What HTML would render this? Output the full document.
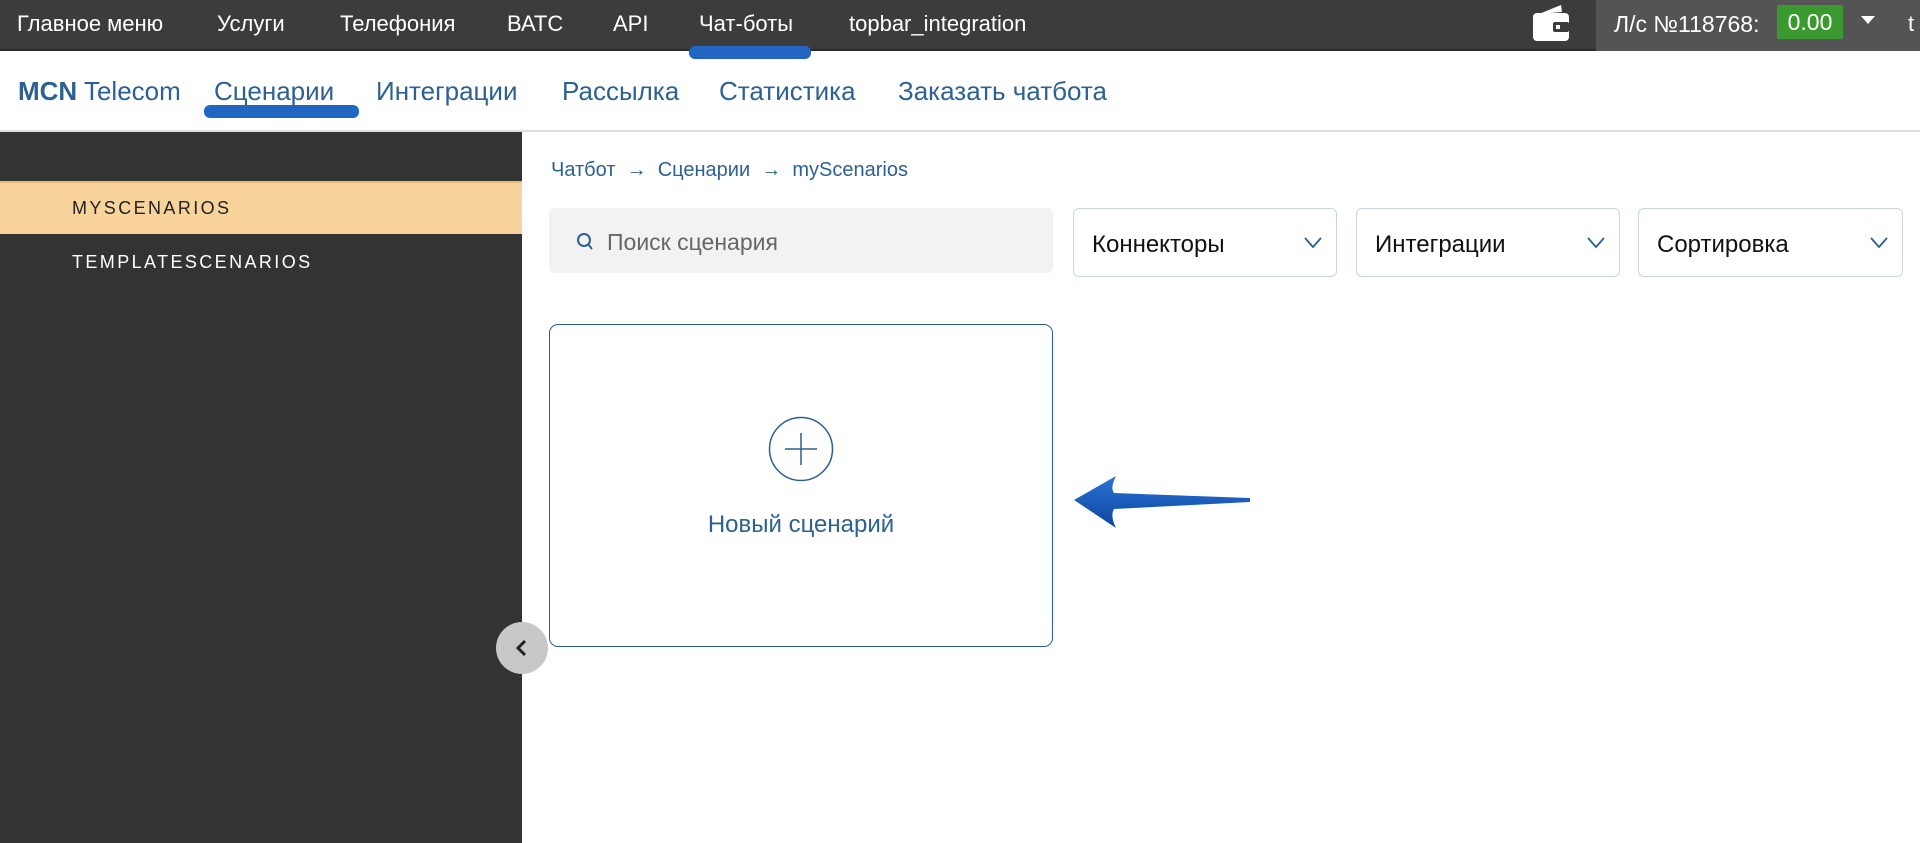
<!DOCTYPE html>
<html><head><meta charset="utf-8"><style>
*{margin:0;padding:0;box-sizing:border-box}
body{width:1920px;height:843px;overflow:hidden;background:#fff;font-family:"Liberation Sans","DejaVu Sans",sans-serif;position:relative}
.a{position:absolute;white-space:nowrap}
.top{left:0;top:0;width:1920px;height:51px;background:#3c3c3c;border-bottom:2px solid #2a2a2a}
.tm{top:11px;font-size:22px;color:#fff}
.nav{top:76px;font-size:26px;color:#2c6192}
.dd{top:208px;height:69px;border:1.5px solid #c8d4de;border-radius:6px;background:#fff}
.dd span{position:absolute;left:18px;top:22px;font-size:24px;color:#111}
.dd svg{position:absolute;right:14px;top:28px}
</style></head><body>
<div class="a top"></div>
<div class="a" style="left:1596px;top:0;width:324px;height:51px;background:#545454"></div>
<div class="a tm" style="left:17px">Главное меню</div>
<div class="a tm" style="left:217px">Услуги</div>
<div class="a tm" style="left:340px">Телефония</div>
<div class="a tm" style="left:507px">ВАТС</div>
<div class="a tm" style="left:613px">API</div>
<div class="a tm" style="left:699px">Чат-боты</div>
<div class="a tm" style="left:849px">topbar_integration</div>
<div class="a" style="left:689px;top:46px;width:122px;height:13px;background:#2266c4;border-radius:6px"></div>
<svg class="a" style="left:1531px;top:2px" width="40" height="42" viewBox="0 0 40 42"><path d="M8 12 L30 3 L31 10 Z" fill="#fff"/><rect x="2" y="11" width="36" height="28" rx="4" fill="#fff"/><rect x="22" y="20" width="16" height="10" rx="2" fill="#3c3c3c"/><rect x="25" y="23" width="4" height="4" fill="#fff"/></svg>
<div class="a" style="left:1614px;top:11px;font-size:23px;color:#fff">Л/с №118768:</div>
<div class="a" style="left:1777px;top:5px;width:66px;height:34px;background:#3a9a2f;border-radius:2px;color:#fff;font-size:23px;text-align:center;line-height:34px">0.00</div>
<svg class="a" style="left:1861px;top:16px" width="14" height="9"><path d="M0 0H14L7 8Z" fill="#fff"/></svg>
<div class="a" style="left:1908px;top:11px;font-size:22px;color:#fff">t</div>

<div class="a" style="left:0;top:130px;width:1920px;height:2px;background:#ddd"></div>
<div class="a nav" style="left:18px"><b>MCN</b> Telecom</div>
<div class="a nav" style="left:214px">Сценарии</div>
<div class="a nav" style="left:376px">Интеграции</div>
<div class="a nav" style="left:562px">Рассылка</div>
<div class="a nav" style="left:719px">Статистика</div>
<div class="a nav" style="left:898px">Заказать чатбота</div>
<div class="a" style="left:204px;top:105px;width:155px;height:13px;background:#2266c4;border-radius:6px"></div>

<div class="a" style="left:0;top:132px;width:522px;height:711px;background:#333"></div>
<div class="a" style="left:0;top:181px;width:522px;height:53px;background:#f8d49c;border-top:2px solid #e8b870"></div>
<div class="a" style="left:72px;top:198px;font-size:18px;letter-spacing:2.4px;color:#222">MYSCENARIOS</div>
<div class="a" style="left:72px;top:252px;font-size:18px;letter-spacing:2.4px;color:#fff">TEMPLATESCENARIOS</div>
<div class="a" style="left:496px;top:622px;width:52px;height:52px;border-radius:50%;background:#c8c8c8"></div>
<svg class="a" style="left:514px;top:639px" width="16" height="18"><path d="M11 2 L4 9 L11 16" stroke="#222" stroke-width="3" fill="none"/></svg>

<div class="a" style="left:551px;top:159px;font-size:20px;color:#2c6192">Чатбот &nbsp;→&nbsp; Сценарии &nbsp;→&nbsp; myScenarios</div>
<div class="a" style="left:549px;top:208px;width:504px;height:65px;background:#f2f2f2;border-radius:6px"></div>
<svg class="a" style="left:576px;top:232px" width="18" height="20"><circle cx="8" cy="8" r="6" stroke="#2c6192" stroke-width="2" fill="none"/><path d="M12 12L16 17" stroke="#2c6192" stroke-width="2"/></svg>
<div class="a" style="left:607px;top:229px;font-size:23px;color:#666">Поиск сценария</div>
<div class="a dd" style="left:1073px;width:264px"><span>Коннекторы</span><svg width="18" height="12"><path d="M1 1L9 10L17 1" stroke="#2c6192" stroke-width="1.8" fill="none"/></svg></div>
<div class="a dd" style="left:1356px;width:264px"><span>Интеграции</span><svg width="18" height="12"><path d="M1 1L9 10L17 1" stroke="#2c6192" stroke-width="1.8" fill="none"/></svg></div>
<div class="a dd" style="left:1638px;width:265px"><span>Сортировка</span><svg width="18" height="12"><path d="M1 1L9 10L17 1" stroke="#2c6192" stroke-width="1.8" fill="none"/></svg></div>

<div class="a" style="left:549px;top:324px;width:504px;height:323px;border:1.5px solid #2c5f8c;border-radius:9px"></div>
<svg class="a" style="left:768px;top:416px" width="66" height="66"><circle cx="33" cy="33" r="31.5" stroke="#2c5f8c" stroke-width="1.5" fill="none"/><path d="M33 17V49M17 33H49" stroke="#2c5f8c" stroke-width="1.5"/></svg>
<div class="a" style="left:549px;top:511px;width:504px;text-align:center;font-size:24px;color:#2c6192">Новый сценарий</div>
<svg class="a" style="left:1070px;top:472px" width="184" height="60" viewBox="0 0 184 60"><defs><linearGradient id="g" x1="0" y1="0" x2="0" y2="1"><stop offset="0" stop-color="#2a74d4"/><stop offset="1" stop-color="#0c45a0"/></linearGradient></defs><path d="M4 28 L46 4 Q40 16 44 21 L180 26 L180 30 L44 37 Q40 44 46 56 Z" fill="url(#g)"/></svg>
</body></html>
